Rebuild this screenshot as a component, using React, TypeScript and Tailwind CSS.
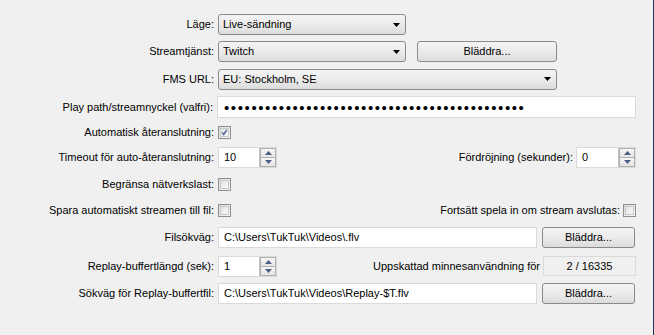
import React from "react";

const font = { fontFamily: '"Liberation Sans", Arial, sans-serif' };

function Combo({ value, width }: { value: string; width: string }) {
  return (
    <div
      className={`${width} h-[21px] flex items-center justify-between pl-[4px] pr-[5px] rounded-[3px] border border-[#8a8a8a] bg-gradient-to-b from-[#f4f4f4] via-[#ebebeb] to-[#dcdcdc]`}
    >
      <span>{value}</span>
      <svg width="7" height="4" viewBox="0 0 7 4">
        <path d="M0 0h7L3.5 4z" fill="#000" />
      </svg>
    </div>
  );
}

function Button({ label, width }: { label: string; width: string }) {
  return (
    <div
      className={`${width} h-[21px] flex items-center justify-center rounded-[3px] border border-[#8a8a8a] bg-gradient-to-b from-[#f4f4f4] via-[#ebebeb] to-[#dcdcdc]`}
    >
      {label}
    </div>
  );
}

function TextBox({ value, width }: { value: string; width: string }) {
  return (
    <div className={`${width} h-[21px] flex items-center px-[5px] bg-white border border-[#dadada]`}>
      {value}
    </div>
  );
}

function Spinner({ value, width = "w-[59px]" }: { value: string; width?: string }) {
  return (
    <div className={`${width} h-[21px] flex bg-white border border-[#dadada]`}>
      <div className="flex-1 pl-[5px] leading-[18px]">{value}</div>
      <div className="w-[17px] flex flex-col border-l border-[#c4c4c4]">
        {[0, 1].map((i) => (
          <div
            key={i}
            className={`flex-1 flex items-center justify-center bg-gradient-to-b from-[#f6f6f6] to-[#e4e4e4] border border-[#b0b0b0] ${
              i === 0 ? "border-b-0" : ""
            }`}
          >
            <svg width="7" height="4" viewBox="0 0 7 4">
              <path d={i === 0 ? "M0 4h7L3.5 0z" : "M0 0h7L3.5 4z"} fill="#4b5f86" />
            </svg>
          </div>
        ))}
      </div>
    </div>
  );
}

function Check({ checked = false }: { checked?: boolean }) {
  return (
    <div className="w-[13px] h-[13px] border border-[#8e8f8f] bg-gradient-to-br from-[#dcdcdc] to-[#f8f8f8] p-[1px]">
      <div className="w-full h-full border border-[#c8c8c8] bg-gradient-to-br from-[#e2e2e2] to-[#fafafa] flex items-center justify-center">
        {checked && (
          <svg width="9" height="9" viewBox="0 0 9 9">
            <path d="M1.5 4.5l2 2.5L7.5 1" stroke="#4a5f97" strokeWidth="1.8" fill="none" />
          </svg>
        )}
      </div>
    </div>
  );
}

function Row({ label, h, children }: { label: string; h: string; children: React.ReactNode }) {
  return (
    <div className={`${h} flex items-center`}>
      <div className="w-[214px] text-right whitespace-nowrap">{label}</div>
      <div className="ml-[4px] flex items-center flex-1">{children}</div>
    </div>
  );
}

export default function App() {
  return (
    <div
      className="w-[654px] h-[335px] bg-[#f0f0f0] text-[11px] text-black border-r border-[#1f3a60] overflow-hidden"
      style={font}
    >
      <div className="w-[636px] pt-[11px]">
        <Row label="Läge:" h="h-[27px]">
          <Combo value="Live-sändning" width="w-[188px]" />
        </Row>
        <Row label="Streamtjänst:" h="h-[27px]">
          <Combo value="Twitch" width="w-[188px]" />
          <div className="ml-[11px]">
            <Button label="Bläddra..." width="w-[140px]" />
          </div>
        </Row>
        <Row label="FMS URL:" h="h-[28px]">
          <Combo value="EU: Stockholm, SE" width="w-[339px]" />
        </Row>
        <Row label="Play path/streamnyckel (valfri):" h="h-[28px]">
          <div className="w-[419px] h-[22px] flex items-center pl-[6px] bg-white border border-[#dadada]">
            <span className="text-[15px] tracking-[1.6px] leading-none">{"•".repeat(44)}</span>
          </div>
        </Row>
        <Row label="Automatisk återanslutning:" h="h-[22px]">
          <Check checked />
        </Row>
        <Row label="Timeout för auto-återanslutning:" h="h-[28px]">
          <Spinner value="10" />
          <div className="flex-1" />
          <span className="mr-[3px]">Fördröjning (sekunder):</span>
          <Spinner value="0" width="w-[60px]" />
        </Row>
        <Row label="Begränsa nätverkslast:" h="h-[26px]">
          <Check />
        </Row>
        <Row label="Spara automatiskt streamen till fil:" h="h-[26px]">
          <Check />
          <div className="flex-1" />
          <span className="mr-[3px]">Fortsätt spela in om stream avslutas:</span>
          <Check />
        </Row>
        <Row label="Filsökväg:" h="h-[28px]">
          <TextBox value="C:\Users\TukTuk\Videos\.flv" width="w-[319px]" />
          <div className="ml-[5px]">
            <Button label="Bläddra..." width="w-[93px]" />
          </div>
        </Row>
        <Row label="Replay-buffertlängd (sek):" h="h-[30px]">
          <Spinner value="1" />
          <div className="flex-1" />
          <span className="mr-[3px]">Uppskattad minnesanvändning för</span>
          <div className="w-[93px] h-[20px] flex items-center justify-center border border-[#dadada]">
            2 / 16335
          </div>
        </Row>
        <Row label="Sökväg för Replay-buffertfil:" h="h-[24px]">
          <TextBox value="C:\Users\TukTuk\Videos\Replay-$T.flv" width="w-[319px]" />
          <div className="ml-[5px]">
            <Button label="Bläddra..." width="w-[93px]" />
          </div>
        </Row>
      </div>
    </div>
  );
}
